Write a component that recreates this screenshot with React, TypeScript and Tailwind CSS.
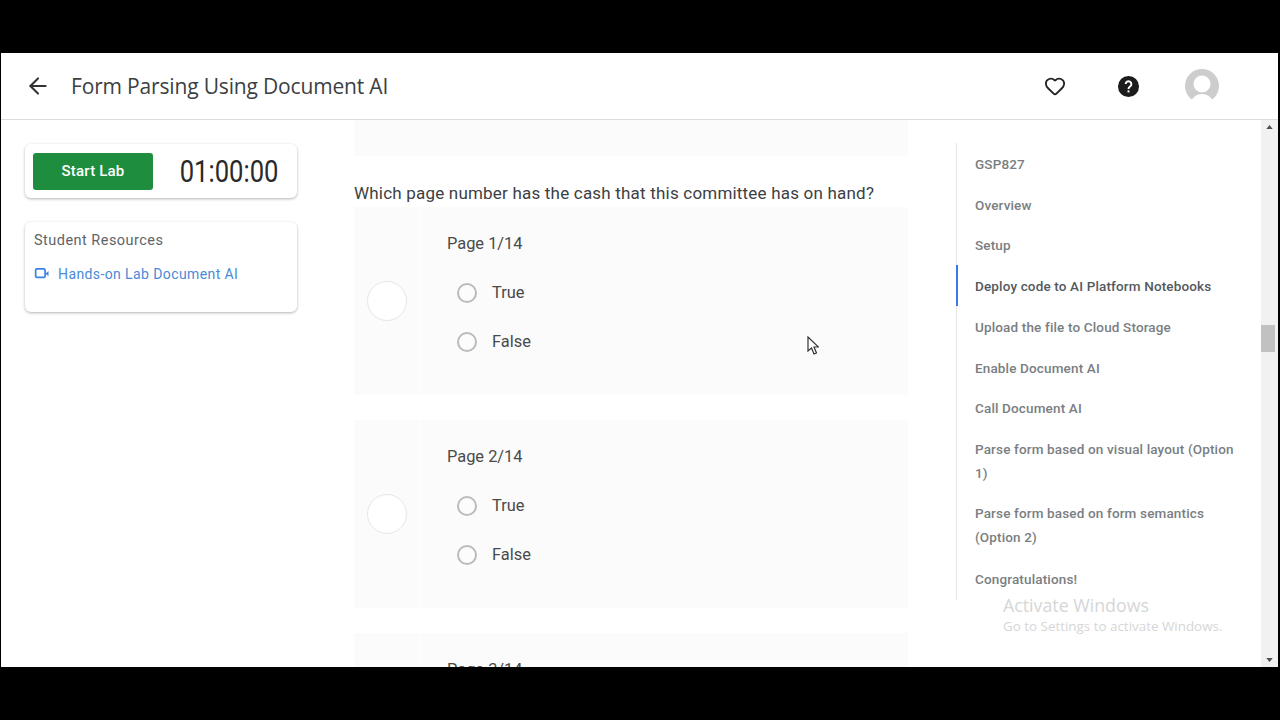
import { ArrowLeft, Heart } from 'lucide-react';

const tocItems = [
  { label: 'GSP827', h: 'h-[41px]' },
  { label: 'Overview', h: 'h-[41px]' },
  { label: 'Setup', h: 'h-[40px]' },
  { label: 'Deploy code to AI Platform Notebooks', h: 'h-[41px]', active: true },
  { label: 'Upload the file to Cloud Storage', h: 'h-[41px]' },
  { label: 'Enable Document AI', h: 'h-[41px]' },
  { label: 'Call Document AI', h: 'h-[40px]' },
  { label: 'Parse form based on visual layout (Option 1)', h: 'h-[65px]' },
  { label: 'Parse form based on form semantics (Option 2)', h: 'h-[64px]' },
  { label: 'Congratulations!', h: 'h-[43px]' },
];

function PageOption({ page }: { page: string }) {
  return (
    <div className="flex h-[188px] bg-[#fbfbfb]">
      <div className="flex w-[67px] items-center justify-center border-r-2 border-[#fdfdfd]">
        <div className="h-10 w-10 rounded-full border border-[#e6e6e6] bg-white" />
      </div>
      <div className="pl-[26px] pt-[26px]">
        <div className="text-[16.4px] leading-[22px] text-[#4a4a4a]">{page}</div>
        <div className="mt-[27px] flex flex-col gap-[27px] pl-[10px]">
          {['True', 'False'].map((o) => (
            <div key={o} className="flex h-[22px] items-center gap-[15px]">
              <div className="h-[20px] w-[20px] rounded-full border-2 border-[#bbb] bg-[#fcfcfc]" />
              <span className="text-[16.4px] text-[#4a4a4a]">{o}</span>
            </div>
          ))}
        </div>
      </div>
    </div>
  );
}

export default function App() {
  return (
    <div className="relative flex h-[720px] w-[1280px] flex-col overflow-hidden bg-black pb-[53px] pl-[1px] pr-[2px] pt-[53px] font-['Roboto',sans-serif]">
      <div className="flex flex-1 flex-col overflow-hidden bg-white">
        <header className="flex h-[67px] shrink-0 items-center border-b border-[#dcdcdc] pl-[24px] pr-[59px]">
          <ArrowLeft size={26} strokeWidth={1.9} className="text-[#333]" />
          <h1 className="ml-[20px] pt-[1px] font-['Open_Sans',sans-serif] text-[21px] tracking-[-0.17px] text-[#3c4043]">
            Form Parsing Using Document AI
          </h1>
          <Heart size={22} strokeWidth={2} className="ml-auto text-[#222]" />
          <svg viewBox="0 0 24 24" className="ml-[51px] h-[23px] w-[23px]">
            <circle cx="12" cy="12" r="11" fill="#1c1c1c" />
            <path
              d="M9 9.5a3 3 0 1 1 4.6 2.5c-1 .7-1.6 1.2-1.6 2.6"
              fill="none"
              stroke="#fff"
              strokeWidth="2"
            />
            <rect x="11" y="16" width="2" height="2.2" fill="#fff" />
          </svg>
          <svg viewBox="0 0 34 34" className="ml-[45px] h-[34px] w-[34px]">
            <circle cx="17" cy="17" r="17" fill="#cdcdcd" />
            <circle cx="17" cy="15" r="8.5" fill="#fff" />
            <path d="M6 34 C8 22 26 22 28 34 Z" fill="#fff" />
            <rect x="0" y="30" width="34" height="4" fill="#fff" />
          </svg>
        </header>

        <div className="flex min-h-0 flex-1">
          <aside className="w-[353px] shrink-0 pl-[24px] pt-[24px]">
            <div className="flex h-[54px] w-[272px] items-center justify-between rounded-md pl-[8px] pr-[19px] shadow-[0_1px_3px_rgba(0,0,0,0.3)]">
              <button className="flex h-[37px] w-[120px] items-center justify-center rounded-[3px] bg-[#1e8e3e] text-[15px] font-medium tracking-[0.2px] text-white">
                Start Lab
              </button>
              <span className="origin-right text-[32px] leading-none text-[#2a2a2a] [transform:scaleX(0.8)]">
                01:00:00
              </span>
            </div>
            <div className="mt-[24px] h-[90px] w-[272px] rounded-md pl-[9px] pt-[10px] shadow-[0_1px_3px_rgba(0,0,0,0.3)]">
              <div className="text-[14.5px] leading-[18px] tracking-[0.47px] text-[#5f6368]">
                Student Resources
              </div>
              <div className="mt-[15px] flex items-center gap-[7px] text-[14px] leading-[18px] tracking-[0.4px] text-[#4a8ad8]">
                <svg viewBox="0 0 18 14" className="h-[12px] w-[17px]">
                  <rect x="1" y="1" width="11" height="10" rx="1.5" fill="none" stroke="#3b82e0" strokeWidth="2" />
                  <path d="M13 6l3-2.5v6L13 7z" fill="#3b82e0" />
                </svg>
                Hands-on Lab Document AI
              </div>
            </div>
          </aside>

          <main className="w-[554px] shrink-0 overflow-hidden">
            <div className="h-[36px] bg-[#fbfbfb]" />
            <p className="mt-[25px] text-[17px] leading-[24px] tracking-[0.2px] text-[#3c4043]">
              Which page number has the cash that this committee has on hand?
            </p>
            <div className="mt-[2px] flex flex-col gap-[25px]">
              <PageOption page="Page 1/14" />
              <PageOption page="Page 2/14" />
              <PageOption page="Page 3/14" />
            </div>
          </main>

          <nav className="ml-[48px] h-[481px] w-[303px] shrink-0 pt-[23px]">
            <ul>
              {tocItems.map((item) => (
                <li
                  key={item.label}
                  className={`flex items-center pr-[20px] text-[13.5px] font-medium leading-[24px] tracking-[0.15px] ${item.h} ${
                    item.active
                      ? 'border-l-2 border-[#3b78e7] pl-[17px] text-[#55595d]'
                      : 'border-l border-[#e6e6e6] pl-[18px] text-[#7a7e82]'
                  }`}
                >
                  {item.label}
                </li>
              ))}
            </ul>
          </nav>

          <div className="ml-auto flex w-[17px] shrink-0 flex-col items-center justify-between bg-[#f1f1f1] py-[5px]">
            <svg viewBox="0 0 8 5" className="h-[4px] w-[7px]">
              <path d="M4 0l4 5H0z" fill="#505050" />
            </svg>
            <svg viewBox="0 0 8 5" className="h-[4px] w-[7px]">
              <path d="M0 0h8L4 5z" fill="#505050" />
            </svg>
          </div>
        </div>
      </div>

      {/* scrollbar thumb, windows watermark and mouse pointer sit over the page */}
      <div className="absolute left-[1261px] top-[325px] h-[27px] w-[14px] bg-[#c1c1c1]" />
      <div className="absolute left-[1003px] top-[594px] font-['Open_Sans',sans-serif] text-[#d6d6d6]">
        <div className="text-[17.8px] leading-[22px]">Activate Windows</div>
        <div className="mt-[1px] text-[13.4px] leading-[18px]">Go to Settings to activate Windows.</div>
      </div>
      <svg viewBox="0 0 12 19" className="absolute left-[807px] top-[336px] h-[19px] w-[12px]">
        <path d="M1 1v14l3.5-3 2.5 6 2.5-1-2.5-6h4.5z" fill="#fff" stroke="#333" strokeWidth="1.2" />
      </svg>
    </div>
  );
}
